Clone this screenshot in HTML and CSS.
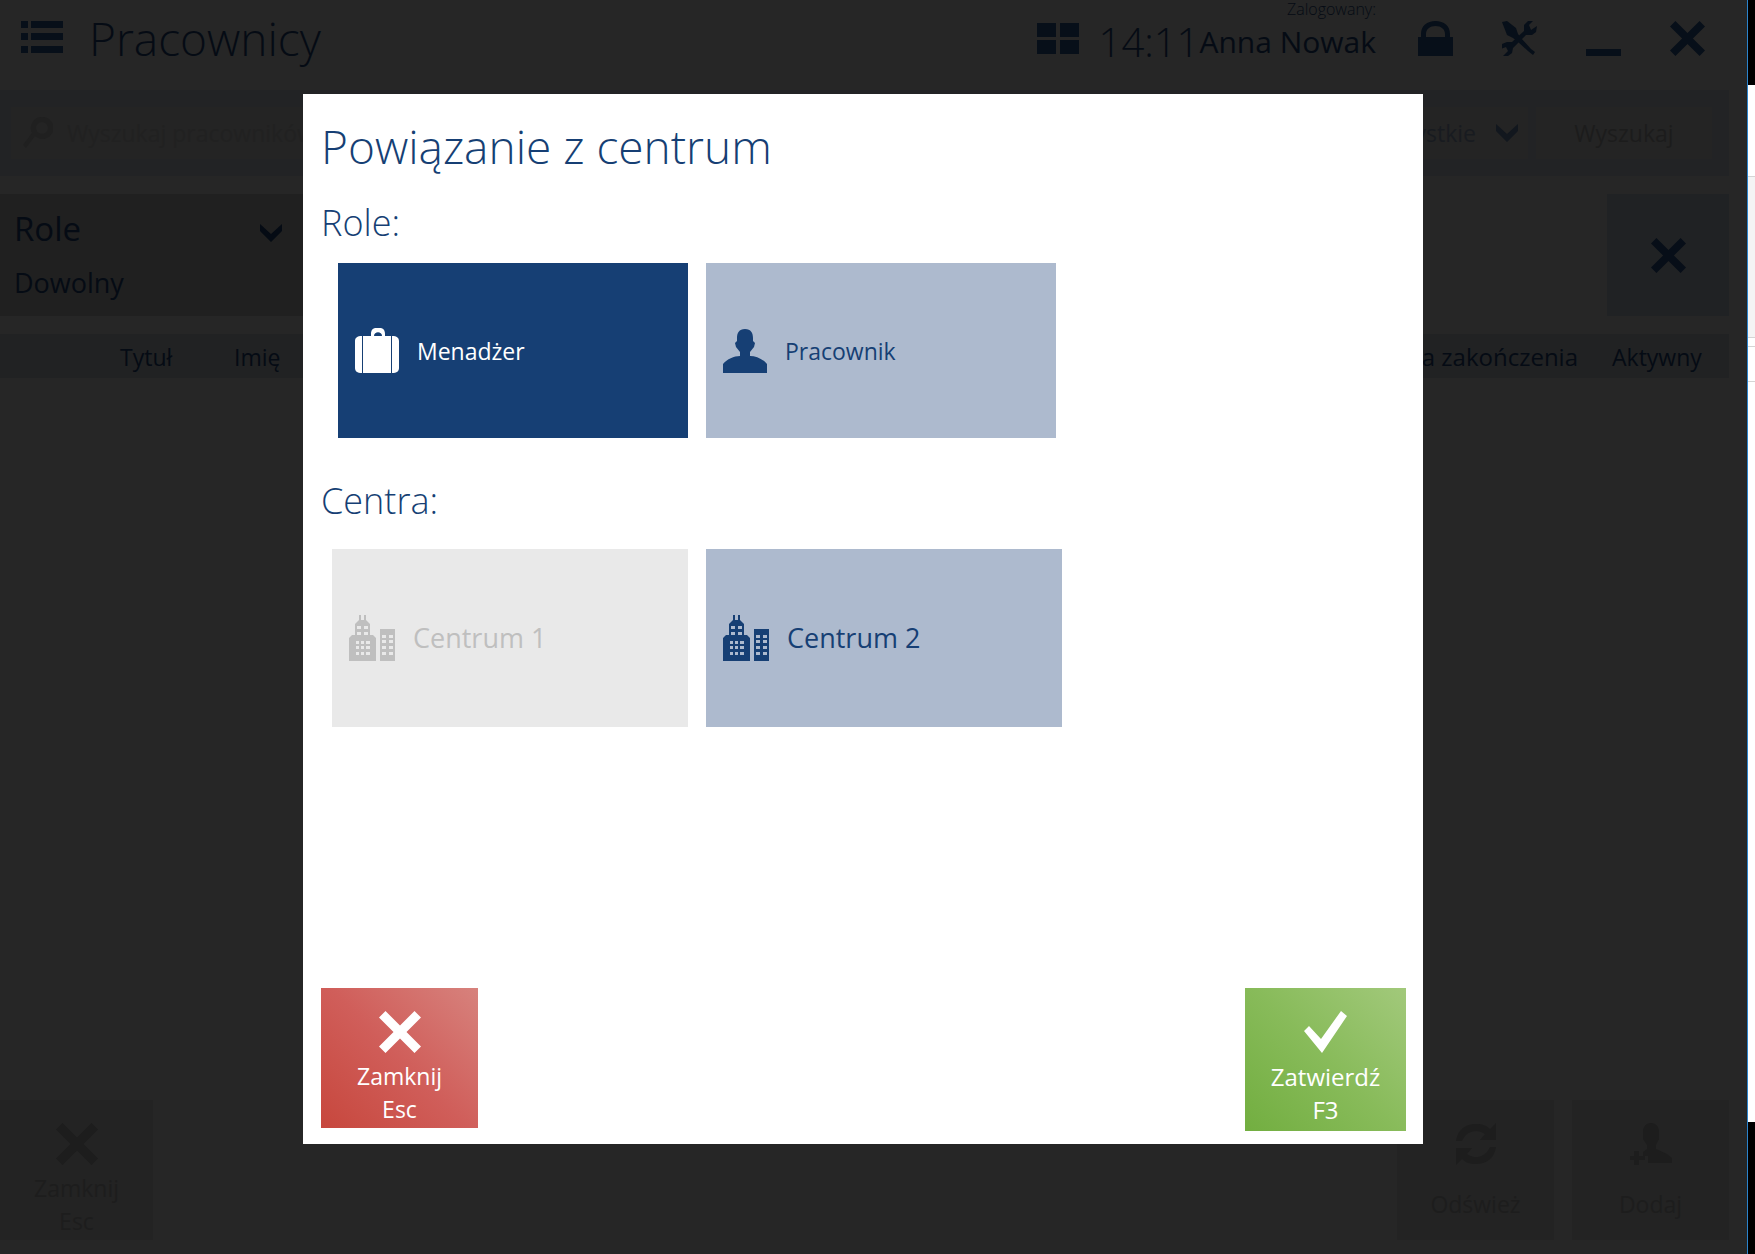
FILE: index.html
```html
<!DOCTYPE html>
<html lang="pl">
<head>
<meta charset="utf-8">
<meta name="viewport" content="width=device-width, initial-scale=1">
<title>Pracownicy</title>
<link rel="stylesheet" href="styles.css">
</head>
<body>
<svg class="symbols" aria-hidden="true">
  <symbol id="cross" viewBox="0 0 42 42"><path d="M6.500 0 21 14.500 35.500 0 42 6.500 27.500 21 42 35.500 35.500 42 21 27.500 6.500 42 0 35.500 14.500 21 0 6.500z"/></symbol>
  <symbol id="chevron" viewBox="0 0 22 18"><path d="M0 0 11 10 22 0V7L11 18 0 7z"/></symbol>
  <symbol id="centre" viewBox="0 0 46 46"><path fill-rule="evenodd" d="M10 0h2v5h3V0h2v5l4 4v11h3l3 3v23H0V23l3-3h3V9l4-4zM8 11v3h4v-3zm7 0v3h4v-3zM8 17v3h4v-3zm7 0v3h4v-3zM7 26v3h3v-3zm5 0v3h3v-3zm5 0v3h4v-3zM7 31v3h3v-3zm5 0v3h3v-3zm5 0v3h4v-3zM7 37v3h3v-3zm5 0v3h3v-3zm5 0v3h4v-3zM31 14h15v32H31zm2 6v3h4v-3zm7 0v3h4v-3zm-7 5v3h4v-3zm7 0v3h4v-3zm-7 6v3h4v-3zm7 0v3h4v-3zm-7 6v3h4v-3zm7 0v3h4v-3z"/></symbol>
</svg>

<div class="app">
  <header class="topbar">
    <button class="icon-button" aria-label="Menu"><svg width="42" height="32" viewBox="0 0 42 32"><path d="M0 0h7v7H0zM10 0h32v7H10zM0 12h7v7H0zM10 12h32v7H10zM0 25h7v7H0zM10 25h32v7H10z"/></svg></button>
    <h1 class="page-title">Pracownicy</h1>
    <div class="status">
      <button class="icon-button" aria-label="Pulpit"><svg width="42" height="31" viewBox="0 0 42 31"><path d="M0 0h19v14H0zM23 0h19v14H23zM0 17h19v14H0zM23 17h19v14H23z"/></svg></button>
      <time class="clock">14:11</time>
      <p class="user"><span class="user-label">Zalogowany:</span><span class="user-name">Anna Nowak</span></p>
    </div>
    <nav class="window-tools">
      <button class="icon-button" aria-label="Zablokuj"><svg width="35" height="35" viewBox="0 0 35 35"><path fill-rule="evenodd" d="M0 16h3V13C3 5 9 0 17.500 0S32 5 32 13v3h3v19H0zM8 16h19v-3c0-5-4-8-9.500-8S8 8 8 13z"/></svg></button>
      <button class="icon-button" aria-label="Ustawienia"><svg width="35" height="35" viewBox="0 0 35 35"><path d="M0 1 5 0l9 7 2 6 3 4 10 11 4 3-2 3-5-4-11-10-4-3-6-3zM35 5l-1 6-4 3-6 0L11 27l-1 5-4 3-5 0 5-5-2-4-5 2 1-5 5-2 5 0L22 10l0-6 4-4 5 0-4 4 2 5z"/></svg></button>
      <button class="icon-button" aria-label="Minimalizuj"><svg width="35" height="35" viewBox="0 0 35 35"><path d="M0 28h35v7H0z"/></svg></button>
      <button class="icon-button" aria-label="Zamknij okno"><svg width="35" height="35"><use href="#cross"/></svg></button>
    </nav>
  </header>

  <main class="content">
    <form class="search">
      <label class="search-box">
        <svg width="30" height="32" viewBox="0 0 30 32"><path fill-rule="evenodd" d="M19 0a11 11 0 1 1-7 19L3 31 0 28 9 16A11 11 0 0 1 19 0zm0 5a6 6 0 1 0 0 12 6 6 0 0 0 0-12z"/></svg>
        <input type="search" placeholder="Wyszukaj pracowników" aria-label="Wyszukaj pracowników">
      </label>
      <div class="filter"><select aria-label="Filtr"><option>Wszystkie</option></select><svg width="22" height="18"><use href="#chevron"/></svg></div>
      <button class="search-button" type="button">Wyszukaj</button>
    </form>
    <section class="criteria">
      <button class="role-filter">
        <span class="role-title">Role<svg width="22" height="18"><use href="#chevron"/></svg></span>
        <span class="role-value">Dowolny</span>
      </button>
      <button class="clear" aria-label="Wyczyść"><svg width="35" height="35"><use href="#cross"/></svg></button>
    </section>
    <table class="staff">
      <thead><tr><th class="col-title">Tytuł</th><th class="col-name">Imię</th><th class="col-end">Data zakończenia</th><th class="col-active">Aktywny</th></tr></thead>
    </table>
  </main>

  <footer class="actions">
    <button class="action action-left"><svg width="42" height="42"><use href="#cross"/></svg><span>Zamknij</span><span>Esc</span></button>
    <button class="action action-right"><svg width="44" height="42" viewBox="0 0 44 42"><path d="M2 18C4 6 12 1 22 1c7 0 11 2 14 5l6-6v17H26l5-6c-8-6-19-3-23 7zM42 24c-2 12-10 17-20 17-7 0-11-2-14-5l-6 6V25h16l-5 6c8 6 19 3 23-7z"/></svg><span class="single">Odśwież</span></button>
    <button class="action"><svg width="42" height="42" viewBox="0 0 42 42"><path d="M13 9c0-12 16-12 16 0v7l-3 6v4l11 5 5 4v5H18v-7h-5v-4l4-3v-4l-4-6zM4 28h5v5h6v4H9v5H4v-5H0v-4h4z"/></svg><span class="single">Dodaj</span></button>
  </footer>

  <div class="layer">
    <dialog class="dialog" open aria-labelledby="dialog-title">
      <h2 class="dialog-title" id="dialog-title">Powiązanie z centrum</h2>
      <h3 class="group-title">Role:</h3>
      <div class="tiles roles">
        <button class="tile selected"><svg width="44" height="45" viewBox="0 0 44 45"><path fill-rule="evenodd" d="M8 8h8V6c0-4 2-6 5-6h4c3 0 5 2 5 6v2h6v37H8zM19 8h8c0-5-8-5-8 0zM7 8v37C2 45 0 43 0 40V13c0-3 2-5 7-5zM37 8c5 0 7 2 7 5v27c0 3-2 5-7 5z"/></svg>Menadżer</button>
        <button class="tile"><svg width="44" height="44" viewBox="0 0 44 44"><path d="M22 0c6 0 8 4 8 9v3l2 2-1 4-4 5v4c6 0 13 3 17 8v9H0v-9c4-5 11-8 17-8v-4l-4-5-1-4 2-2V9c0-5 2-9 8-9z"/></svg>Pracownik</button>
      </div>
      <h3 class="group-title">Centra:</h3>
      <div class="tiles centres">
        <button class="tile" disabled><svg width="46" height="46"><use href="#centre"/></svg>Centrum 1</button>
        <button class="tile"><svg width="46" height="46"><use href="#centre"/></svg>Centrum 2</button>
      </div>
      <div class="dialog-actions">
        <button class="action close"><svg width="42" height="42"><use href="#cross"/></svg><span>Zamknij</span><span>Esc</span></button>
        <button class="action confirm"><svg width="43" height="42" viewBox="0 0 43 42"><path d="M0 20 5 15 17 28 37 0 43 5 18 42z"/></svg><span>Zatwierdź</span><span>F3</span></button>
      </div>
    </dialog>
  </div>
</div>
<aside class="edge"><div class="edge-top"></div><div class="edge-panel"></div><div class="edge-row"></div><div class="edge-row"></div><div class="edge-rest"></div><div class="edge-bottom"></div></aside>
</body>
</html>
```
FILE: styles.css
```css
* { box-sizing: border-box; }

body {
  margin: 0;
  display: flex;
  min-height: 100vh;
  background: #262626;
  color: #050b14;
  font-family: "Open Sans", "Noto Sans", sans-serif;
  font-size: 23px;
  line-height: 32px;
}

h1, h2, h3, p { margin: 0; font-weight: 300; }

button, input, select {
  border: 0;
  padding: 0;
  background: none;
  color: inherit;
  font: inherit;
}

svg { display: block; flex: none; fill: currentColor; }
.symbols { position: absolute; width: 0; height: 0; }

.app {
  position: relative;
  flex: 1;
  min-width: 0;
  display: flex;
  flex-direction: column;
}

.topbar {
  display: flex;
  align-items: flex-start;
  height: 90px;
  padding: 0 42px 0 21px;
}
.icon-button { padding-top: 21px; color: #070f19; }
.page-title {
  margin-left: 26px;
  font-size: 46px;
  line-height: 76px;
}
.status { display: flex; align-items: flex-start; margin-left: auto; }
.status .icon-button { padding-top: 23px; }
.clock {
  margin-left: 20px;
  font-size: 40px;
  font-weight: 300;
  line-height: 84px;
}
.user { display: flex; flex-direction: column; align-items: flex-end; }
.user-label { font-size: 16px; line-height: 18px; }
.user-name { font-size: 30px; font-weight: 400; line-height: 48px; }
.window-tools { display: flex; gap: 49px; margin-left: 42px; }

.content { padding-right: 18px; }
.search {
  display: flex;
  height: 86px;
  padding: 17px 17px 17px 11px;
  gap: 8px;
  background: #222325;
}
.search-box, .filter {
  display: flex;
  align-items: center;
  background: #242424;
}
.search-box { flex: 1; padding-left: 12px; gap: 14px; color: #202020; }
.search-box input { flex: 1; min-width: 0; }
.search-box input::placeholder { color: #212121; opacity: 1; }
.filter { width: 180px; padding: 0 10px; gap: 20px; color: #12171e; }
.filter select {
  flex: 1;
  min-width: 0;
  appearance: none;
  color: #181b20;
  text-align-last: right;
}
.search-button { width: 176px; background: #242424; color: #1c1c1c; }

.criteria {
  display: flex;
  justify-content: space-between;
  height: 122px;
  margin: 18px 0;
}
.role-filter {
  display: flex;
  flex-direction: column;
  width: 303px;
  padding: 12px 21px 0 14px;
  background: #202020;
  text-align: left;
}
.role-title {
  display: flex;
  justify-content: space-between;
  align-items: center;
  font-size: 33px;
  line-height: 46px;
}
.role-title svg { margin-top: 8px; }
.role-value { font-size: 27px; line-height: 62px; }
.clear {
  display: grid;
  place-items: center;
  width: 122px;
  background: #202224;
  color: #070e18;
}

.staff { width: 100%; border-collapse: collapse; table-layout: fixed; background: #212223; }
.staff th { height: 44px; padding: 2px 0 0; font-weight: 400; text-align: left; white-space: nowrap; }
.staff .col-title { width: 234px; padding-left: 120px; }
.staff .col-end { width: 225px; padding-right: 34px; text-align: right; direction: rtl; font-size: 24px; }
.staff .col-active { width: 117px; }

.actions {
  display: flex;
  gap: 18px;
  margin-top: auto;
  padding: 0 18px 14px 0;
  color: #1d1d1d;
}
.action {
  display: flex;
  flex-direction: column;
  align-items: center;
  width: 157px;
  height: 140px;
  padding-top: 23px;
  background: #232323;
  line-height: 33px;
}
.action svg { margin-bottom: 7px; }
.action-left { width: 153px; }
.action-right { margin-left: auto; }
.single { padding-top: 16px; }

.layer {
  position: absolute;
  inset: 0;
  display: flex;
  padding: 94px 324px 110px 303px;
}
.dialog {
  position: static;
  flex: 1;
  display: flex;
  flex-direction: column;
  max-width: none;
  height: auto;
  margin: 0;
  border: 0;
  padding: 16px 17px 13px 18px;
  background: #fff;
  color: #163f74;
}
.dialog-title { margin-bottom: 3px; font-size: 46px; line-height: 72px; }
.group-title { font-size: 36px; line-height: 76px; }
.tiles { display: flex; gap: 18px; }
.tile {
  display: flex;
  align-items: center;
  gap: 18px;
  width: 350px;
  height: 175px;
  padding-left: 17px;
  background: #adbace;
}
.roles { padding-left: 17px; margin: 2px 0 25px; }
.selected { background: #163f74; color: #fff; }
.centres { padding-left: 11px; margin-top: 10px; }
.centres .tile { width: 356px; height: 178px; font-size: 27px; }
.tile:disabled { background: #e9e9e9; color: #bfbfbf; }
.dialog-actions {
  display: flex;
  justify-content: space-between;
  margin-top: auto;
}
.close {
  background: linear-gradient(45deg, #c7473d, #d05e5a 50%, #d7827d);
  color: #fff;
}
.confirm {
  width: 161px;
  height: 143px;
  background: linear-gradient(45deg, #72ae40, #88bb5a 50%, #a2c97b);
  color: #fff;
  font-size: 24px;
}

.edge {
  display: flex;
  flex-direction: column;
  width: 8px;
  border-left: 1px solid #2b83cc;
  background: #fff;
}
.edge-top { height: 85px; background: #000; }
.edge-panel {
  height: 162px;
  margin-top: 91px;
  border: 1px solid #d5d5d5;
  border-width: 1px 0;
  background: #f4f4f4;
}
.edge-row { height: 9px; border-bottom: 1px solid #d5d5d5; }
.edge-row + .edge-row { height: 35px; }
.edge-rest { flex: 1; }
.edge-bottom { height: 132px; background: #000; }
```
